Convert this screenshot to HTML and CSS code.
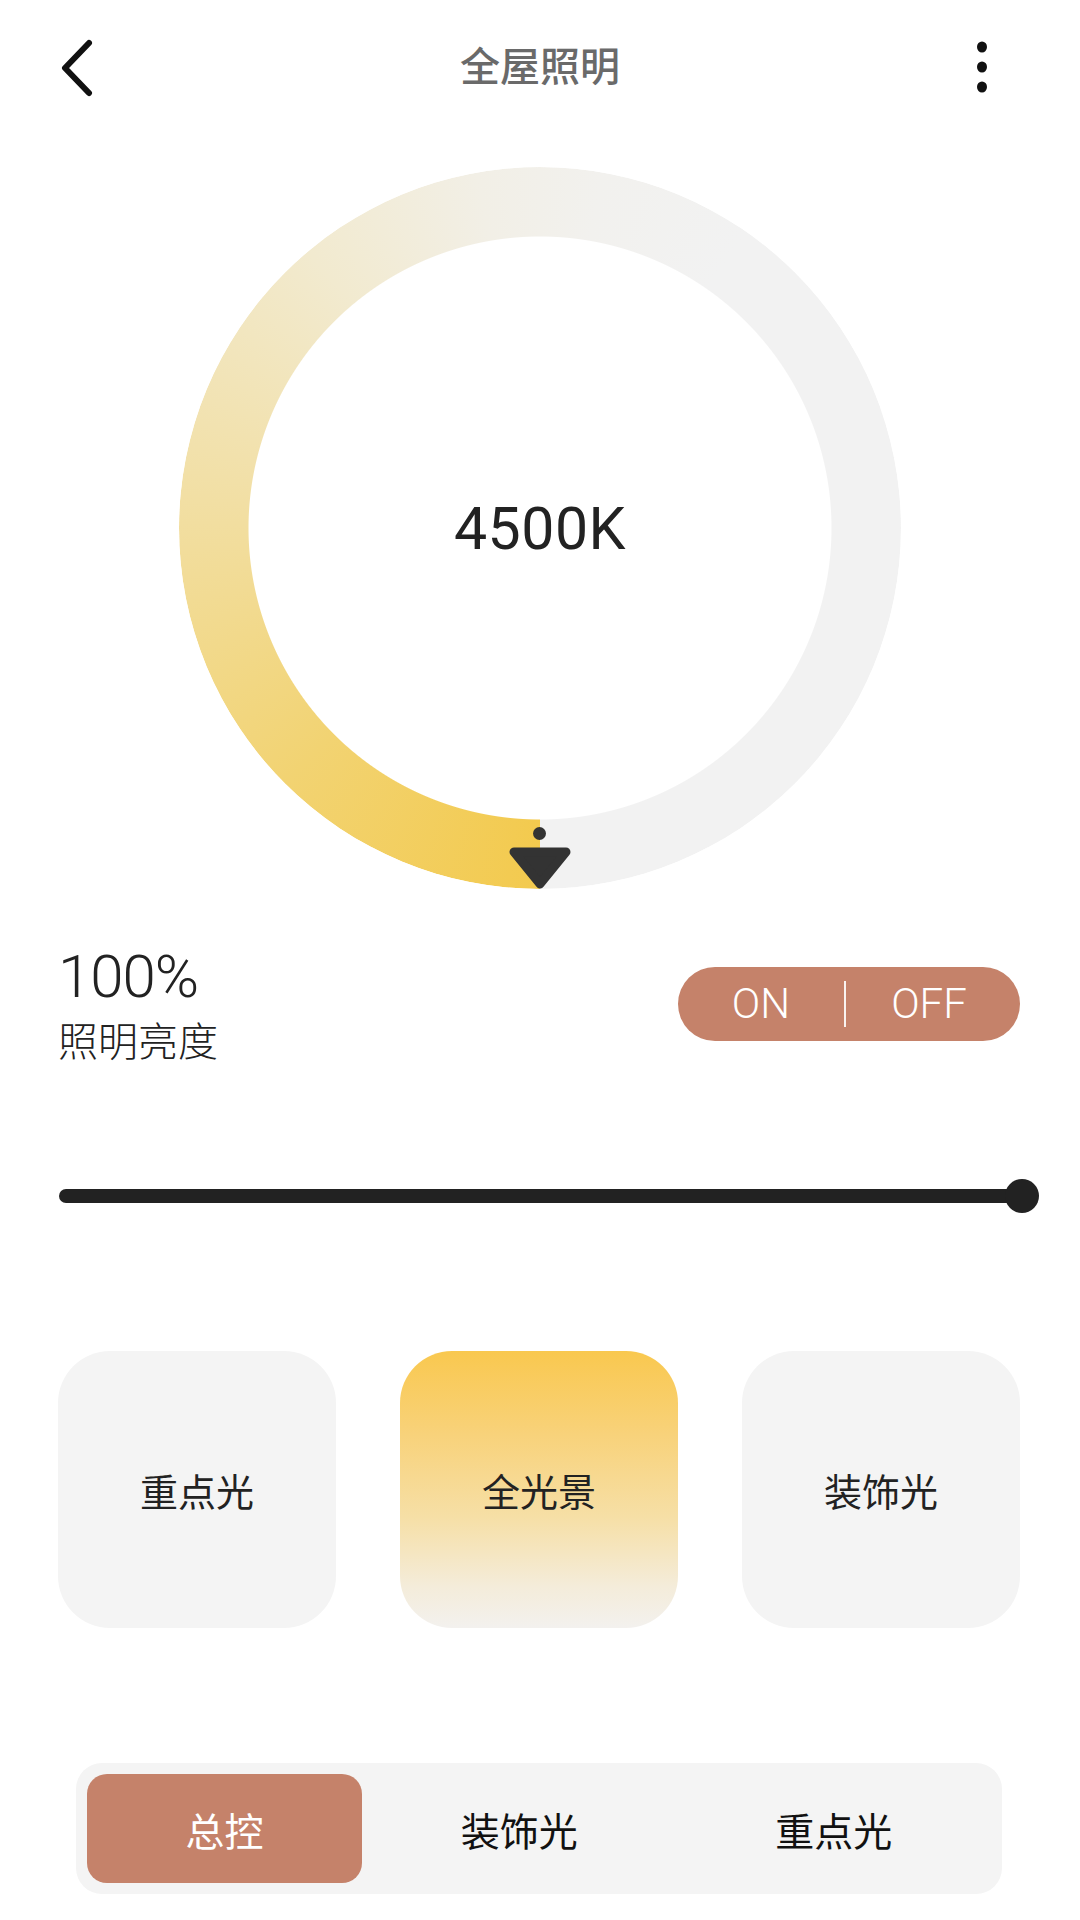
FILE: index.html
```html
<!DOCTYPE html>
<html lang="zh">
<head>
<meta charset="utf-8">
<title>全屋照明</title>
<link rel="stylesheet" href="styles.css">
</head>
<body>
<div class="page">
  <header class="topbar">
    <svg class="icon-back" width="40" height="60" viewBox="0 0 40 60">
      <polyline points="31,6 7,31 31,56" fill="none" stroke="#111" stroke-width="6" stroke-linecap="round" stroke-linejoin="round"/>
    </svg>
    <h1 class="title">全屋照明</h1>
    <svg class="icon-more" width="20" height="60" viewBox="0 0 20 60">
      <ellipse cx="10" cy="10" rx="5" ry="5.5" fill="#111"/>
      <ellipse cx="10" cy="30" rx="5" ry="5.5" fill="#111"/>
      <ellipse cx="10" cy="50" rx="5" ry="5.5" fill="#111"/>
    </svg>
  </header>

  <section class="dial">
    <div class="ring"></div>
    <div class="dial-value">4500K</div>
    <div class="handle-dot"></div>
    <svg class="handle-tri" width="62" height="42" viewBox="0 0 62 42">
      <polygon points="5,5 57,5 31,37" fill="#333" stroke="#333" stroke-width="9" stroke-linejoin="round"/>
    </svg>
  </section>

  <section class="brightness">
    <div class="bright-text">
      <div class="bright-value">100%</div>
      <div class="bright-label">照明亮度</div>
    </div>
    <div class="switch">
      <span class="switch-opt">ON</span>
      <span class="switch-div"></span>
      <span class="switch-opt">OFF</span>
    </div>
  </section>

  <section class="slider">
    <div class="track"></div>
    <div class="knob"></div>
  </section>

  <section class="cards">
    <div class="card">重点光</div>
    <div class="card card-active">全光景</div>
    <div class="card">装饰光</div>
  </section>

  <nav class="tabs">
    <div class="tab tab-active">总控</div>
    <div class="tab">装饰光</div>
    <div class="tab">重点光</div>
  </nav>
</div>
</body>
</html>
```

FILE: styles.css
```css
* { box-sizing: border-box; }
html, body {
  margin: 0;
  padding: 0;
  background: #ffffff;
}
body {
  font-family: "Noto Sans CJK SC", "Noto Sans", sans-serif;
  color: #222;
}
.page {
  width: 1080px;
  height: 1920px;
  overflow: hidden;
  display: flex;
  flex-direction: column;
}

/* Top bar */
.topbar {
  height: 134px;
  display: flex;
  align-items: center;
  justify-content: space-between;
  padding: 0 88px 0 58px;
  position: relative;
}
.icon-back { display: block; }
.icon-more { display: block; }
.title {
  margin: 0;
  font-size: 40px;
  font-weight: 500;
  color: #6a6a6a;
  position: absolute;
  left: 0;
  right: 0;
  text-align: center;
  top: 38px;
  line-height: 52px;
  pointer-events: none;
}

/* Dial */
.dial {
  margin: 33px auto 0;
  width: 722px;
  height: 722px;
  position: relative;
  display: flex;
  align-items: center;
  justify-content: center;
}
.ring {
  position: absolute;
  inset: 0;
  border-radius: 50%;
  background: conic-gradient(from 180deg,
    #f3ca4e 0deg,
    #f2d372 45deg,
    #f2dfa4 95deg,
    #f2eacf 140deg,
    #f2efe6 170deg,
    #f2f1ee 190deg,
    #f2f2f2 215deg,
    #f2f2f2 360deg);
  -webkit-mask: radial-gradient(circle at center, transparent 291px, #000 292px);
  mask: radial-gradient(circle at center, transparent 291px, #000 292px);
}
.dial-value {
  position: relative;
  font-family: Roboto, "Noto Sans", sans-serif;
  font-size: 59px;
  font-weight: 400;
  color: #222;
  letter-spacing: 0.5px;
}
.handle-dot {
  position: absolute;
  left: 354px;
  top: 660px;
  width: 13px;
  height: 13px;
  border-radius: 50%;
  background: #333;
}
.handle-tri {
  position: absolute;
  left: 330px;
  top: 680px;
}

/* Brightness row */
.brightness {
  margin-top: 65px;
  height: 100px;
  display: flex;
  align-items: center;
  justify-content: space-between;
  padding: 0 60px 0 58px;
}
.bright-text {
  display: flex;
  flex-direction: column;
}
.bright-value {
  font-family: Roboto, "Noto Sans", sans-serif;
  font-weight: 300;
  font-size: 60px;
  line-height: 60px;
  letter-spacing: -1px;
  color: #222;
}
.bright-label {
  margin-top: 10px;
  font-size: 40px;
  line-height: 44px;
  font-weight: 300;
  color: #222;
}
.switch {
  width: 342px;
  height: 74px;
  border-radius: 37px;
  background: #c5826a;
  display: flex;
  align-items: center;
  padding: 0 8px 0 0;
}
.switch-opt {
  flex: 1;
  text-align: center;
  font-family: Roboto, "Noto Sans", sans-serif;
  font-weight: 300;
  font-size: 42px;
  color: #fff;
  line-height: 74px;
}
.switch-div {
  width: 2px;
  height: 46px;
  background: #fff;
  opacity: 0.9;
}

/* Slider */
.slider {
  margin: 122px 42px 0 59px;
  height: 40px;
  position: relative;
  display: flex;
  align-items: center;
}
.track {
  width: 100%;
  height: 14px;
  border-radius: 7px;
  background: #222;
}
.knob {
  position: absolute;
  right: -1px;
  top: 3px;
  width: 34px;
  height: 34px;
  border-radius: 50%;
  background: #222;
}

/* Cards */
.cards {
  margin-top: 135px;
  padding: 0 60px 0 58px;
  display: grid;
  grid-template-columns: 1fr 1fr 1fr;
  gap: 64px;
}
.card {
  height: 277px;
  border-radius: 52px;
  background: #f4f4f4;
  display: flex;
  align-items: center;
  justify-content: center;
  font-size: 38px;
  color: #222;
}
.card-active {
  background: linear-gradient(to bottom, #f9c84f 0%, #f8d27a 30%, #f6dfa6 60%, #f4ecda 85%, #f3f1ee 100%);
}

/* Tabs */
.tabs {
  margin: 135px 78px 0 76px;
  height: 131px;
  border-radius: 26px;
  background: #f4f4f4;
  padding: 11px;
  display: grid;
  grid-template-columns: 275px 1fr 1fr;
}
.tab {
  border-radius: 20px;
  display: flex;
  align-items: center;
  justify-content: center;
  font-size: 39px;
  color: #111;
}
.tab-active {
  background: #c5826a;
  color: #fff;
}
```
